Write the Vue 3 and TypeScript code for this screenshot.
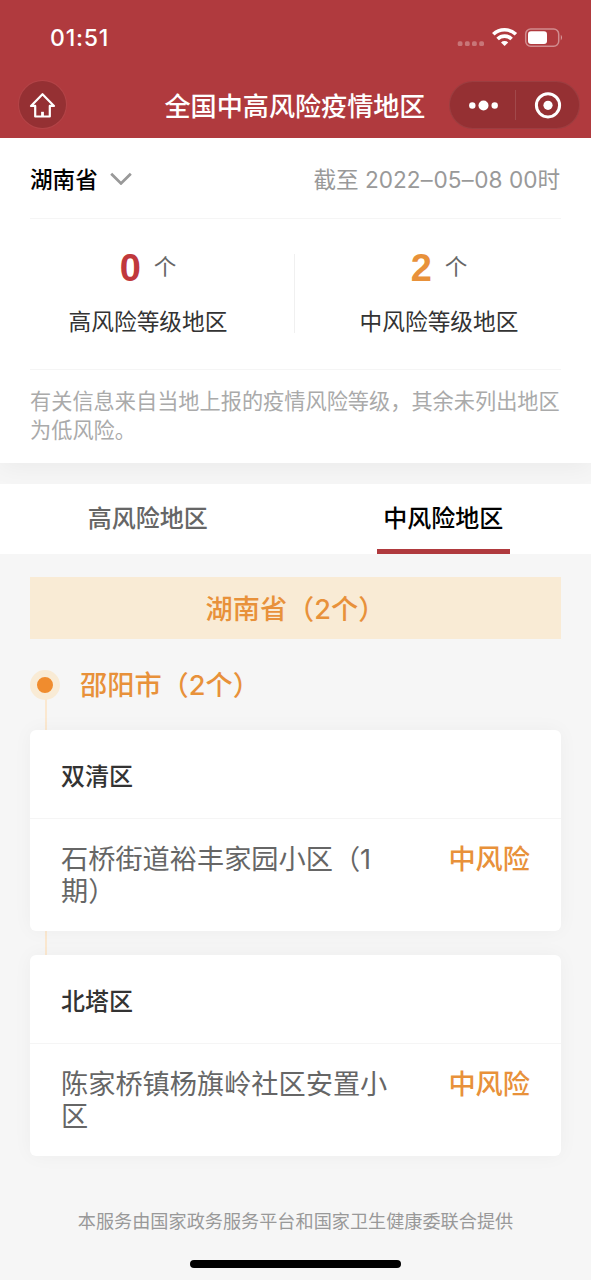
<script setup lang="ts">
interface Stat {
  value: number
  label: string
  level: 'high' | 'mid'
}
interface Area {
  district: string
  place: string
  risk: string
}

const stats: Stat[] = [
  { value: 0, label: '高风险等级地区', level: 'high' },
  { value: 2, label: '中风险等级地区', level: 'mid' },
]
const tabs: string[] = ['高风险地区', '中风险地区']
const activeTab = 1
const areas: Area[] = [
  { district: '双清区', place: '石桥街道裕丰家园小区（1期）', risk: '中风险' },
  { district: '北塔区', place: '陈家桥镇杨旗岭社区安置小区', risk: '中风险' },
]
</script>

<template>
  <div class="page">
    <header class="header">
      <div class="status">
        <span class="time">01:51</span>
        <svg class="status-icons" width="108" height="24" viewBox="0 0 108 24">
          <g fill="#fff" opacity="0.3">
            <rect x="1.7" y="16.3" width="4.8" height="4.8" rx="1.6" />
            <rect x="8.9" y="16.3" width="4.8" height="4.8" rx="1.6" />
            <rect x="16" y="16.3" width="4.8" height="4.8" rx="1.6" />
            <rect x="23.2" y="16.3" width="4.8" height="4.8" rx="1.6" />
          </g>
          <g fill="none" stroke="#fff" stroke-width="3.6">
            <path d="M37.3 9.3a16.2 16.2 0 0 1 22.6 0" />
            <path d="M41.6 14a10 10 0 0 1 14 0" />
          </g>
          <path d="M48.6 21l-3.6-3.6a5.2 5.2 0 0 1 7.2 0z" fill="#fff" />
          <rect x="69.7" y="4" width="33" height="17.2" rx="5" fill="none" stroke="#fff" stroke-opacity="0.42" stroke-width="1.5" />
          <rect x="72" y="6.2" width="19" height="12.8" rx="3" fill="#fff" />
          <path d="M104.8 9.8q2.4 2.6 0 5.6z" fill="#fff" opacity="0.5" />
        </svg>
      </div>
      <div class="nav">
        <div class="home">
          <svg width="47" height="47" viewBox="0 0 47 47" fill="none" stroke="#fff" stroke-width="2.2" stroke-linejoin="round" stroke-linecap="round">
            <path d="M23.5 13.2L12 24.9h4.2v10.6h14.6V24.9H35z" />
            <path d="M23.5 35v-4.2" stroke-width="2.8" stroke-linecap="butt" />
          </svg>
        </div>
        <h1 class="title">全国中高风险疫情地区</h1>
        <div class="capsule">
          <svg width="131" height="48" viewBox="0 0 131 48">
            <g fill="#fff">
              <circle cx="23.3" cy="24.5" r="3.2" />
              <circle cx="34.5" cy="24.5" r="5" />
              <circle cx="45.7" cy="24.5" r="3.2" />
              <circle cx="99" cy="24.3" r="4.6" />
            </g>
            <path d="M66.5 9v30" stroke="#fff" stroke-opacity="0.12" />
            <circle cx="99" cy="24.3" r="11.6" fill="none" stroke="#fff" stroke-width="3" />
          </svg>
        </div>
      </div>
    </header>

    <section class="summary">
      <div class="filter">
        <div class="province">
          <span>湖南省</span>
          <svg width="22" height="14" viewBox="0 0 22 14" fill="none" stroke="#999" stroke-width="2.8">
            <path d="M1.2 2.8L11 12.4l9.8-9.6" />
          </svg>
        </div>
        <span class="date">截至 <span class="digits">2022<span class="dash">–</span>05<span class="dash">–</span>08 00</span>时</span>
      </div>
      <div class="stats">
        <div v-for="s in stats" :key="s.label" class="stat">
          <div class="figure">
            <span class="number" :class="s.level">{{ s.value }}</span>
            <span class="unit">个</span>
          </div>
          <div class="label">{{ s.label }}</div>
        </div>
      </div>
      <p class="note">有关信息来自当地上报的疫情风险等级，其余未列出地区为低风险。</p>
    </section>

    <nav class="tabs">
      <div v-for="(t, i) in tabs" :key="t" class="tab" :class="{ active: i === activeTab }">
        <span>{{ t }}</span>
      </div>
    </nav>

    <main class="list">
      <div class="banner">湖南省（2个）</div>
      <div class="city">
        <span class="marker"></span>
        <span class="city-name">邵阳市（2个）</span>
      </div>
      <div class="cards">
        <article v-for="a in areas" :key="a.district" class="card">
          <h2 class="district">{{ a.district }}</h2>
          <div class="detail">
            <span class="place">{{ a.place }}</span>
            <span class="risk">{{ a.risk }}</span>
          </div>
        </article>
      </div>
    </main>

    <footer class="footer">
      <span>本服务由国家政务服务平台和国家卫生健康委联合提供</span>
      <div class="indicator"></div>
    </footer>
  </div>
</template>

<style>
body {
  margin: 0;
  background: #f6f6f6;
}
</style>

<style scoped>
.page {
  width: 591px;
  height: 1280px;
  display: flex;
  flex-direction: column;
  overflow: hidden;
  background: #f6f6f6;
  font-family: Inter, "Noto Sans CJK SC", sans-serif;
  box-sizing: border-box;
}
.page * {
  box-sizing: border-box;
}
.header {
  height: 138px;
  flex: none;
  background: #b03a3e;
  color: #fff;
}
.status {
  height: 80px;
  padding: 25px 27px 0 50px;
  display: flex;
  justify-content: space-between;
}
.time {
  font-size: 23px;
  line-height: 26px;
  font-weight: 500;
  letter-spacing: 0.8px;
}
.status-icons {
  flex: none;
}
.nav {
  height: 49px;
  padding: 0 11px 0 19px;
  display: grid;
  grid-template-columns: 131px 1fr 131px;
  align-items: center;
}
.home {
  width: 47px;
  height: 47px;
  border-radius: 50%;
  background: #953033;
  box-shadow: 0 0 0 1px rgba(255, 255, 255, 0.05);
}
.home svg,
.capsule svg {
  display: block;
}
.title {
  margin: 0 9px 0 0;
  height: 48px;
  font-size: 26.1px;
  line-height: 51px;
  font-weight: 500;
  text-align: center;
  white-space: nowrap;
  justify-self: center;
}
.capsule {
  width: 131px;
  height: 48px;
  border-radius: 24px;
  background: #953033;
  box-shadow: inset 0 0 0 1px rgba(255, 255, 255, 0.07);
}
.summary {
  height: 325px;
  flex: none;
  padding: 0 30px;
  background: #fff;
  box-shadow: 0 4px 24px rgba(0, 0, 0, 0.05);
  clip-path: inset(0 0 -30px 0);
}
.filter {
  height: 81px;
  display: flex;
  align-items: center;
  justify-content: space-between;
  border-bottom: 1px solid #f5f5f5;
}
.province {
  display: flex;
  align-items: center;
  gap: 12px;
  font-size: 22.6px;
  font-weight: 500;
  color: #000;
}
.date {
  padding-right: 1px;
  font-size: 22.6px;
  color: #999;
  white-space: nowrap;
}
.dash {
  display: inline-block;
  transform: scaleX(1.05);
  margin: 0 0.8px;
}
.stats {
  height: 151px;
  display: flex;
  margin: 0 -30px;
  padding-left: 2.5px;
  position: relative;
}
.stats::before {
  content: "";
  position: absolute;
  left: 294px;
  top: 35px;
  width: 1px;
  height: 79px;
  background: #f0f0f0;
}
.stats::after {
  content: "";
  position: absolute;
  left: 30px;
  right: 30px;
  bottom: 0;
  height: 1px;
  background: #f5f5f5;
}
.stat {
  width: 291px;
  padding-top: 27px;
  display: flex;
  flex-direction: column;
  align-items: center;
}
.figure {
  height: 44px;
  display: flex;
  align-items: center;
  gap: 13px;
}
.number {
  font-family: "Liberation Sans", Arial, sans-serif;
  font-size: 38px;
  line-height: 44px;
  font-weight: 700;
}
.high {
  color: #c0383c;
}
.mid {
  color: #e8913a;
}
.unit {
  font-size: 22.6px;
  line-height: 40px;
  margin-bottom: 3px;
  color: #666;
}
.label {
  margin-top: 15px;
  font-size: 22.7px;
  line-height: 34px;
  color: #333;
}
.note {
  margin: 0 -2px 0 0;
  padding-top: 17px;
  font-size: 21.2px;
  line-height: 29px;
  color: #aaa;
}
.tabs {
  height: 70px;
  flex: none;
  margin-top: 21px;
  display: flex;
  background: #fff;
  position: relative;
}
.tab {
  flex: 1;
  display: flex;
  justify-content: center;
  font-size: 24px;
  line-height: 69px;
  font-weight: 500;
  color: #666;
}
.tab span {
  height: 70px;
  padding: 0 6.5px;
}
.active {
  color: #000;
}
.active span {
  border-bottom: 5px solid #b03a3e;
}
.list {
  padding: 23px 30px 0;
}
.banner {
  height: 62px;
  background: #f9ebd5;
  color: #e8913a;
  font-size: 27.2px;
  line-height: 65px;
  font-weight: 500;
  text-align: center;
}
.city {
  height: 91px;
  display: flex;
  align-items: center;
  gap: 20px;
  color: #e8913a;
  font-size: 27.2px;
  font-weight: 500;
}
.city-name {
  margin-bottom: 4px;
}
.marker {
  width: 30px;
  height: 30px;
  border-radius: 50%;
  border: 7.5px solid #f9ebd5;
  background: #f08c2e;
}
.cards {
  display: flex;
  flex-direction: column;
  gap: 24px;
  position: relative;
}
.cards::before {
  content: "";
  position: absolute;
  left: 14.5px;
  top: -31px;
  width: 2px;
  height: 260px;
  background: #fbe8d0;
}
.card {
  height: 201px;
  position: relative;
  background: #fff;
  border-radius: 6px;
  box-shadow: 0 0 20px rgba(0, 0, 0, 0.04);
}
.district {
  margin: 0;
  height: 89px;
  padding: 0 31px;
  font-size: 24px;
  line-height: 94px;
  font-weight: 500;
  color: #333;
  border-bottom: 1px solid #f5f5f5;
}
.detail {
  padding: 25px 31px 0;
  display: flex;
  justify-content: space-between;
  font-size: 27.2px;
  line-height: 32px;
}
.place {
  width: 332px;
  color: #666;
}
.risk {
  color: #e8913a;
  font-weight: 500;
}
.footer {
  flex: 1;
  display: flex;
  flex-direction: column;
  align-items: center;
  padding-top: 51px;
  font-size: 18.15px;
  line-height: 28px;
  color: #999;
}
.indicator {
  width: 211px;
  height: 8px;
  margin-top: 25px;
  border-radius: 4px;
  background: #000;
}
</style>
